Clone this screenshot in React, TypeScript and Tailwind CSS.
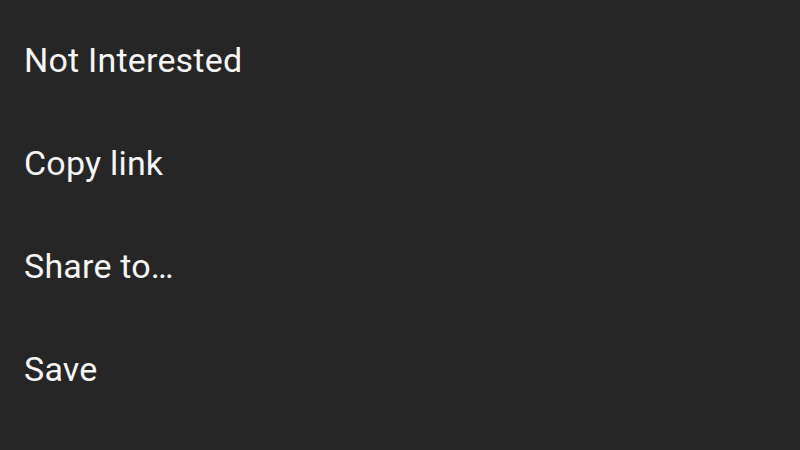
export default function App() {
  const items = ["Not Interested", "Copy link", "Share to…", "Save"];
  return (
    <div
      className="w-[800px] h-[450px] bg-[#262626] pt-[9px] overflow-hidden"
      style={{ fontFamily: "Roboto, 'Noto Sans', sans-serif" }}
    >
      {items.map((t) => (
        <div key={t} className="h-[103px] flex items-center pl-[24px] text-[34px] tracking-[0.2px] text-[#f5f5f5]">
          {t}
        </div>
      ))}
    </div>
  );
}
